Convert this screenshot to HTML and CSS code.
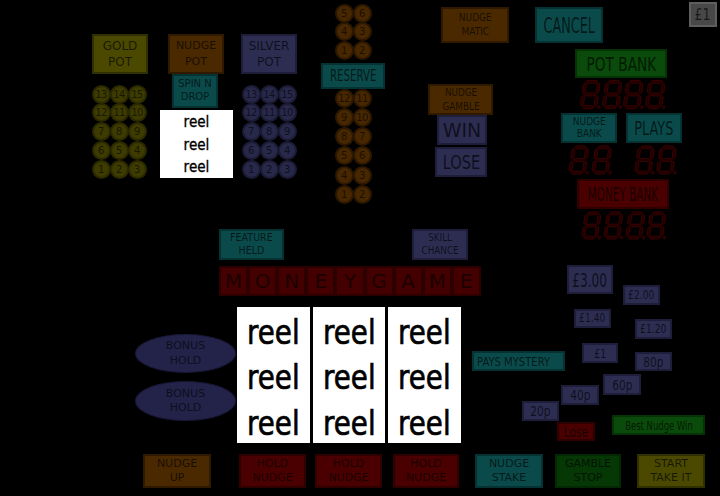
FILE: index.html
```html
<!DOCTYPE html>
<html lang="en">
<head>
    <meta charset="UTF-8">
    <title>Fruit Machine</title>
    <link rel="stylesheet" href="styles.css">
</head>
<body>
    <svg class="defs" width="0" height="0">
        <defs>
            <symbol id="seg8" viewBox="0 0 22 31">
                <g transform="translate(4.2 0) skewX(-8)">
                    <polygon points="3.5,2.5 5,1 14,1 15.5,2.5 14,4 5,4"/>
                    <polygon points="3.5,15.5 5,14 14,14 15.5,15.5 14,17 5,17"/>
                    <polygon points="3.5,28.5 5,27 14,27 15.5,28.5 14,30 5,30"/>
                    <polygon points="2.5,3.5 4,5 4,13 2.5,14.5 1,13 1,5"/>
                    <polygon points="16.5,3.5 18,5 18,13 16.5,14.5 15,13 15,5"/>
                    <polygon points="2.5,16.5 4,18 4,26 2.5,27.5 1,26 1,18"/>
                    <polygon points="16.5,16.5 18,18 18,26 16.5,27.5 15,26 15,18"/>
                    <circle cx="20" cy="28.5" r="1.4"/>
                </g>
            </symbol>
        </defs>
    </svg>

    <div class="panel">
        <!-- pots -->
        <div class="lamp gold gold-pot"><span class="t12">GOLD<br>POT</span></div>
        <div class="lamp brown nudge-pot"><span class="t11">NUDGE<br>POT</span></div>
        <div class="lamp blue silver-pot"><span class="t12">SILVER<br>POT</span></div>
        <div class="lamp teal spin-drop"><span class="t10">SPIN N<br>DROP</span></div>

        <div class="mini-reel">
            <span>reel</span><span>reel</span><span>reel</span>
        </div>

        <div class="balls gold-balls">
            <i>13</i><i>14</i><i>15</i>
            <i>12</i><i>11</i><i>10</i>
            <i>7</i><i>8</i><i>9</i>
            <i>6</i><i>5</i><i>4</i>
            <i>1</i><i>2</i><i>3</i>
        </div>
        <div class="balls silver-balls">
            <i>13</i><i>14</i><i>15</i>
            <i>12</i><i>11</i><i>10</i>
            <i>7</i><i>8</i><i>9</i>
            <i>6</i><i>5</i><i>4</i>
            <i>1</i><i>2</i><i>3</i>
        </div>

        <!-- reserve ladder -->
        <div class="balls reserve-top">
            <i>5</i><i>6</i>
            <i>4</i><i>3</i>
            <i>1</i><i>2</i>
        </div>
        <div class="lamp teal reserve"><span class="t-reserve">RESERVE</span></div>
        <div class="balls reserve-low">
            <i>12</i><i>11</i>
            <i>9</i><i>10</i>
            <i>8</i><i>7</i>
            <i>5</i><i>6</i>
            <i>4</i><i>3</i>
            <i>1</i><i>2</i>
        </div>

        <!-- right side top -->
        <div class="lamp brown nudge-matic"><span class="t10 sx90">NUDGE<br>MATIC</span></div>
        <div class="lamp teal cancel"><span class="t-cancel">CANCEL</span></div>
        <div class="lamp grey pound-one"><span class="t-pound">£1</span></div>

        <div class="lamp green pot-bank"><span class="t19 sx72">POT BANK</span></div>
        <div class="digits pot-digits">
            <svg><use href="#seg8"/></svg><svg><use href="#seg8"/></svg><svg><use href="#seg8"/></svg><svg><use href="#seg8"/></svg>
        </div>

        <div class="lamp brown nudge-gamble"><span class="t10 sx88">NUDGE<br>GAMBLE</span></div>
        <div class="lamp blue win"><span class="t19">WIN</span></div>
        <div class="lamp blue lose"><span class="t19 sx77">LOSE</span></div>

        <div class="lamp teal nudge-bank"><span class="t10 sx90">NUDGE<br>BANK</span></div>
        <div class="lamp teal plays"><span class="t19 sx68">PLAYS</span></div>
        <div class="digits nb-digits">
            <svg><use href="#seg8"/></svg><svg><use href="#seg8"/></svg>
        </div>
        <div class="digits plays-digits">
            <svg><use href="#seg8"/></svg><svg><use href="#seg8"/></svg>
        </div>

        <div class="lamp red money-bank"><span class="t19 sx55">MONEY BANK</span></div>
        <div class="digits mb-digits">
            <svg><use href="#seg8"/></svg><svg><use href="#seg8"/></svg><svg><use href="#seg8"/></svg><svg><use href="#seg8"/></svg>
        </div>

        <!-- feature -->
        <div class="lamp teal feature-held"><span class="t10 sx95">FEATURE<br>HELD</span></div>
        <div class="lamp blue skill-chance"><span class="t10 sx88">SKILL<br>CHANCE</span></div>

        <div class="moneygame">
            <b>M</b><b>O</b><b>N</b><b>E</b><b>Y</b><b>G</b><b>A</b><b>M</b><b>E</b>
        </div>

        <div class="bonus bonus-1"><span>BONUS<br>HOLD</span></div>
        <div class="bonus bonus-2"><span>BONUS<br>HOLD</span></div>

        <div class="reels">
            <div class="reel"><span>reel</span><span>reel</span><span>reel</span></div>
            <div class="reel"><span>reel</span><span>reel</span><span>reel</span></div>
            <div class="reel"><span>reel</span><span>reel</span><span>reel</span></div>
        </div>

        <!-- cash ladder -->
        <div class="lamp blue cash-300"><span class="t20 sx61">£3.00</span></div>
        <div class="lamp blue cash-200"><span class="t12 sx76">£2.00</span></div>
        <div class="lamp blue cash-140"><span class="t12 sx76">£1.40</span></div>
        <div class="lamp blue cash-120"><span class="t12 sx76">£1.20</span></div>
        <div class="lamp blue cash-100"><span class="t13 sx73">£1</span></div>
        <div class="lamp blue cash-80"><span class="t14 sx75">80p</span></div>
        <div class="lamp blue cash-60"><span class="t14 sx75">60p</span></div>
        <div class="lamp blue cash-40"><span class="t14 sx75">40p</span></div>
        <div class="lamp blue cash-20"><span class="t14 sx75">20p</span></div>
        <div class="lamp red cash-lose"><span class="t14 sx77">Lose</span></div>
        <div class="lamp teal pays-mystery"><span class="t13 sx77">PAYS MYSTERY</span></div>
        <div class="lamp green best-nudge"><span class="t13 sx65">Best Nudge Win</span></div>

        <!-- buttons -->
        <div class="lamp brown btn nudge-up"><span>NUDGE<br>UP</span></div>
        <div class="lamp red btn hold-1"><span>HOLD<br>NUDGE</span></div>
        <div class="lamp red btn hold-2"><span>HOLD<br>NUDGE</span></div>
        <div class="lamp red btn hold-3"><span>HOLD<br>NUDGE</span></div>
        <div class="lamp teal btn nudge-stake"><span>NUDGE<br>STAKE</span></div>
        <div class="lamp green dark btn gamble-stop"><span>GAMBLE<br>STOP</span></div>
        <div class="lamp gold btn start"><span>START<br>TAKE IT</span></div>
    </div>
</body>
</html>
```

FILE: styles.css
```css
body {
    margin: 0;
    background-color: #000;
    font-family: "DejaVu Sans", sans-serif;
}

.defs {
    position: absolute;
}

.panel {
    position: relative;
    width: 720px;
    height: 496px;
    overflow: hidden;
}

/* lamps */
.lamp {
    position: absolute;
    box-sizing: border-box;
    border: 2px solid;
    display: flex;
    align-items: center;
    justify-content: center;
    text-align: center;
    color: rgba(0, 0, 0, 0.66);
}

.lamp span {
    display: inline-block;
    white-space: nowrap;
}

.gold { background-color: #4b4900; border-color: #313000; }
.brown { background-color: #4a2900; border-color: #2f1a00; }
.blue { background-color: #2d2d52; border-color: #1e1e3a; }
.teal { background-color: #0a4a4a; border-color: #053333; }
.red { background-color: #4a0000; border-color: #2f0000; }
.green { background-color: #0a4a0a; border-color: #053305; }
.green.dark { background-color: #063806; border-color: #042804; }
.grey { background-color: #484848; border-color: #5e5e5e; }

/* text sizes */
.t10 { font-size: 10px; line-height: 12.7px; }
.t11 { font-size: 11px; line-height: 16px; }
.t12 { font-size: 12px; line-height: 16.5px; }
.t13 { font-size: 13px; line-height: 15px; }
.t14 { font-size: 14px; line-height: 16px; }
.t19 { font-size: 19px; line-height: 22px; }
.t20 { font-size: 20px; line-height: 22px; }

.sx55 { transform: scaleX(0.55); }
.sx61 { transform: scaleX(0.61); }
.sx65 { transform: scaleX(0.65); }
.sx68 { transform: scaleX(0.68); }
.sx72 { transform: scaleX(0.72); }
.sx73 { transform: scaleX(0.73); }
.sx75 { transform: scaleX(0.75); }
.sx76 { transform: scaleX(0.76); }
.sx77 { transform: scaleX(0.77); }
.sx88 { transform: scaleX(0.88); }
.sx90 { transform: scaleX(0.9); }
.sx95 { transform: scaleX(0.95); }

.t-reserve { font-size: 15.5px; transform: scaleX(0.66); }
.t-cancel { font-size: 22px; transform: scaleX(0.58); }
.t-pound { font-size: 15px; transform: scaleX(0.84); }

/* pots */
.gold-pot { left: 92px; top: 34px; width: 56px; height: 40px; }
.nudge-pot { left: 168px; top: 34px; width: 56px; height: 40px; }
.silver-pot { left: 241px; top: 34px; width: 56px; height: 40px; }
.spin-drop { left: 172px; top: 74px; width: 46px; height: 34px; }

.mini-reel {
    position: absolute;
    left: 160px;
    top: 110px;
    width: 73px;
    height: 68px;
    background-color: #fff;
    display: flex;
    flex-direction: column;
}

.mini-reel span {
    flex: 1;
    font-size: 16px;
    line-height: 22px;
    text-align: center;
    color: #000;
    -webkit-text-stroke: 0.35px #000;
    transform: translateY(1px) scaleX(0.85);
}

/* lamp balls */
.balls {
    position: absolute;
    display: grid;
    grid-template-columns: repeat(3, 18px);
    grid-auto-rows: 18px;
    row-gap: 0.8px;
}

.balls i {
    box-sizing: border-box;
    width: 19px;
    height: 19px;
    margin: -0.5px;
    border: 2px solid;
    border-radius: 50%;
    display: flex;
    align-items: center;
    justify-content: center;
    font-style: normal;
    font-size: 10px;
    letter-spacing: -0.6px;
    color: rgba(0, 0, 0, 0.62);
}

.gold-balls { left: 92px; top: 85px; }
.gold-balls i { background-color: #3d3b00; border-color: #2a2900; }

.silver-balls { left: 242px; top: 85px; }
.silver-balls i { background-color: #28284a; border-color: #1b1b35; }

.reserve-top,
.reserve-low {
    left: 335px;
    grid-template-columns: repeat(2, 18px);
}

.reserve-top { top: 4px; }
.reserve-low { top: 89px; row-gap: 1.3px; }

.reserve-top i,
.reserve-low i { background-color: #472700; border-color: #2c1800; }

.reserve { left: 321px; top: 63px; width: 64px; height: 26px; }

/* right top */
.nudge-matic { left: 441px; top: 7px; width: 68px; height: 36px; }
.nudge-matic span { line-height: 14.5px; }
.cancel { left: 535px; top: 7px; width: 68px; height: 36px; }
.pound-one { left: 689px; top: 2px; width: 28px; height: 25px; }

.pot-bank { left: 575px; top: 49px; width: 92px; height: 29px; }
.nudge-gamble { left: 428px; top: 84px; width: 65px; height: 31px; }
.nudge-gamble span { line-height: 13.4px; }
.win { left: 437px; top: 115px; width: 50px; height: 30px; }
.lose { left: 435px; top: 147px; width: 52px; height: 30px; }
.nudge-bank { left: 561px; top: 113px; width: 56px; height: 30px; }
.nudge-bank span { line-height: 12px; }
.plays { left: 626px; top: 113px; width: 56px; height: 30px; }
.money-bank { left: 577px; top: 179px; width: 92px; height: 30px; }

/* seven segment displays */
.digits {
    position: absolute;
    display: flex;
}

.digits svg {
    flex: 1;
    height: 100%;
    fill: #1e0000;
    stroke: #480000;
    stroke-width: 0.8;
}

.pot-digits { left: 579px; top: 79px; width: 86px; height: 31px; }
.nb-digits { left: 567px; top: 145px; width: 45px; height: 30px; }
.plays-digits { left: 633px; top: 145px; width: 44px; height: 30px; }
.mb-digits { left: 580px; top: 211px; width: 87px; height: 29px; }

/* feature area */
.feature-held { left: 219px; top: 229px; width: 65px; height: 31px; }
.skill-chance { left: 412px; top: 229px; width: 56px; height: 31px; }

.moneygame {
    position: absolute;
    left: 219px;
    top: 266px;
    width: 262px;
    height: 30px;
    display: grid;
    grid-template-columns: repeat(9, 1fr);
}

.moneygame b {
    box-sizing: border-box;
    border: 2px solid #2c0000;
    background-color: #440000;
    display: flex;
    align-items: center;
    justify-content: center;
    font-weight: normal;
    font-size: 20px;
    color: rgba(0, 0, 0, 0.62);
}

.bonus {
    position: absolute;
    left: 135px;
    width: 101px;
    box-sizing: border-box;
    border: 1px solid #181836;
    border-radius: 50%;
    background-color: #23234a;
    display: flex;
    align-items: center;
    justify-content: center;
    text-align: center;
    font-size: 11px;
    line-height: 14.5px;
    color: rgba(0, 0, 0, 0.62);
}

.bonus-1 { top: 334px; height: 39px; }
.bonus-2 { top: 381px; height: 40px; }

.reels {
    position: absolute;
    left: 237px;
    top: 307px;
    width: 224px;
    height: 136px;
    display: flex;
    gap: 3px;
}

.reel {
    flex: 1;
    background-color: #fff;
    display: flex;
    flex-direction: column;
}

.reel span {
    flex: 1;
    font-size: 33px;
    line-height: 45.3px;
    text-align: center;
    color: #000;
    -webkit-text-stroke: 0.7px #000;
    transform: translateY(3px) scaleX(0.84);
}

/* cash ladder */
.cash-300 { left: 567px; top: 265px; width: 46px; height: 29px; }
.cash-200 { left: 623px; top: 285px; width: 37px; height: 20px; }
.cash-140 { left: 574px; top: 309px; width: 37px; height: 19px; }
.cash-120 { left: 635px; top: 319px; width: 37px; height: 20px; }
.cash-100 { left: 582px; top: 343px; width: 36px; height: 20px; }
.cash-80 { left: 635px; top: 352px; width: 37px; height: 19px; }
.cash-60 { left: 603px; top: 374px; width: 38px; height: 21px; }
.cash-40 { left: 561px; top: 385px; width: 38px; height: 20px; }
.cash-20 { left: 522px; top: 401px; width: 37px; height: 20px; }
.cash-lose { left: 557px; top: 422px; width: 38px; height: 19px; }

.pays-mystery {
    left: 472px;
    top: 351px;
    width: 93px;
    height: 20px;
    justify-content: flex-start;
    padding-left: 3px;
}

.pays-mystery span { transform-origin: left center; }

.best-nudge { left: 612px; top: 415px; width: 93px; height: 20px; }

/* buttons */
.btn {
    top: 454px;
    height: 34px;
    font-size: 11px;
    line-height: 14.5px;
}

.nudge-up { left: 143px; width: 68px; }
.hold-1 { left: 239px; width: 67px; }
.hold-2 { left: 315px; width: 67px; }
.hold-3 { left: 393px; width: 66px; }
.nudge-stake { left: 475px; width: 68px; }
.gamble-stop { left: 555px; width: 66px; }
.start { left: 637px; width: 68px; }
```
